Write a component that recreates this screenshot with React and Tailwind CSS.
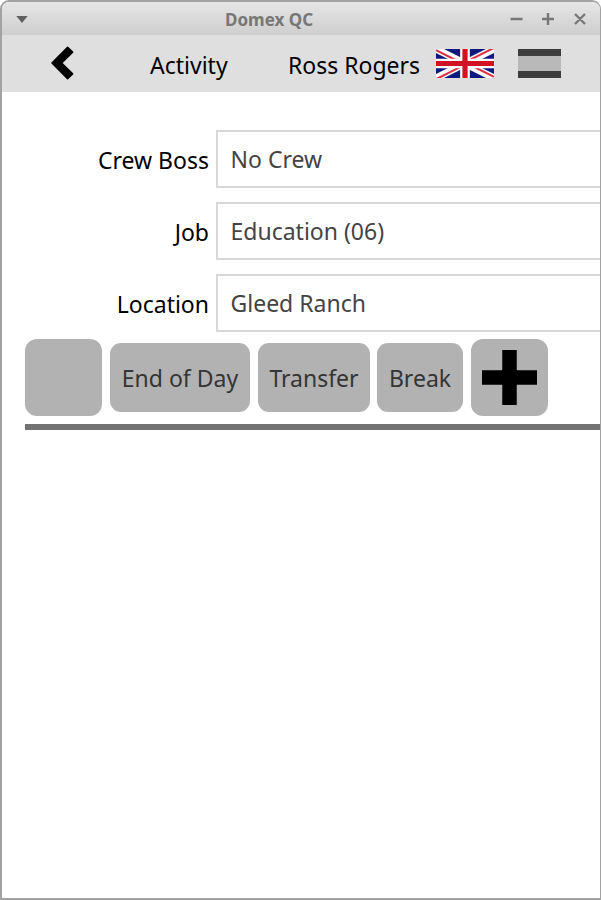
const fields = [
  { label: "Crew Boss", value: "No Crew" },
  { label: "Job", value: "Education (06)" },
  { label: "Location", value: "Gleed Ranch" },
];

const TitleBar = () => (
  <div className="flex h-[33px] shrink-0 items-center bg-gradient-to-b from-[#e6e6e6] to-[#cecece] pl-[14px] pr-[14px] text-[#777777]">
    <svg className="mt-px h-[7px] w-[12px]" viewBox="0 0 12 7">
      <path d="M0.3 0h11.4L6 7z" fill="#606060" />
    </svg>
    <h1 className="ml-[197px] w-[91px] whitespace-nowrap pt-[2px] text-[17px] font-bold leading-none">
      Domex QC
    </h1>
    <svg
      className="ml-auto h-[14px] w-[76px]"
      viewBox="0 0 76 14"
      fill="none"
      stroke="currentColor"
      strokeWidth="2.4"
    >
      <path d="M0.5 7h12M32 7h12M38 1v12M65 2l10 10M75 2l-10 10" />
    </svg>
  </div>
);

const UnionJack = () => (
  <svg className="h-[29px] w-[58px]" viewBox="0 0 60 30">
    <path d="M0 0h60v30H0z" fill="#0c1a80" />
    <path d="M0 0l60 30M60 0L0 30" stroke="#fff" strokeWidth="7.4" />
    <path
      d="M0 1.2l28 14M60 28.8L32 14.8M60 -1.2L32 12.8M0 31.2l28-14"
      stroke="#dc3045"
      strokeWidth="2.2"
    />
    <path d="M30 0v30M0 15h60" stroke="#fff" strokeWidth="10" />
    <path d="M30 0v30M0 15h60" stroke="#d01225" strokeWidth="5.4" />
  </svg>
);

const Header = () => (
  <header className="flex h-[57px] shrink-0 items-center bg-[#dfdfdf] pl-[47px] text-[23px] text-black">
    <svg className="h-[38px] w-[26px] -translate-y-px" viewBox="0 0 26 38" fill="none">
      <path
        d="M20.3 5.5L6.7 19l13.6 13.5"
        stroke="#000"
        strokeWidth="5.5"
        strokeLinejoin="miter"
      />
      <path
        d="M18.6 3.4L3 19l15.6 15.6 5-4.8L12.6 19l11-10.8z"
        fill="#000"
        stroke="#000"
        strokeWidth="1.6"
        strokeLinejoin="round"
      />
    </svg>
    <span className="ml-[75px] w-[138px] whitespace-nowrap pt-[3px]">Activity</span>
    <span className="w-[148px] whitespace-nowrap pt-[3px]">Ross Rogers</span>
    <UnionJack />
    <div className="ml-6 h-[29px] w-[43px] border-y-[7px] border-[#3c3c3c] bg-[#b9b9b9]" />
  </header>
);

const Field = ({ label, value }) => (
  <div className="flex h-[58px] items-center">
    <label className="w-[207px] pt-[3px] text-right text-black">{label}</label>
    <div className="ml-[7px] flex h-full flex-1 items-center border-2 border-r-0 border-[#d8d8d8] pl-[12.5px] pt-px text-[#444444]">
      {value}
    </div>
  </div>
);

const App = () => (
  <div className="flex h-[900px] w-[601px] flex-col overflow-hidden rounded-t-[9px] border-2 border-r border-[#a2a2a2] bg-white font-['Noto_Sans','Open_Sans',sans-serif]">
    <TitleBar />
    <Header />
    <main className="flex flex-col pt-[38px] text-[23px]">
      <div className="flex flex-col gap-[14px]">
        {fields.map((field) => (
          <Field key={field.label} {...field} />
        ))}
      </div>

      <div className="ml-[23px] mt-[7px] flex items-center gap-2 text-[#353535]">
        <button aria-label="Blank" className="h-[77px] w-[77px] rounded-[12px] bg-[#b2b2b2]" />
        <button className="h-[69px] w-[140px] whitespace-nowrap rounded-[11px] bg-[#b2b2b2] pt-[2px]">
          End of Day
        </button>
        <button className="h-[69px] w-[112px] rounded-[11px] bg-[#b2b2b2] pt-[2px]">Transfer</button>
        <button className="-ml-px h-[69px] w-[86px] rounded-[11px] bg-[#b2b2b2] pt-[2px]">Break</button>
        <button
          aria-label="Add"
          className="flex h-[77px] w-[77px] items-center justify-center rounded-[12px] bg-[#b2b2b2]"
        >
          <svg className="h-[55px] w-[55px]" viewBox="0 0 55 55">
            <path d="M27.5 0v55M0 27.5h55" stroke="#000" strokeWidth="14.5" />
          </svg>
        </button>
      </div>
      <div className="ml-[23px] mt-2 h-[6px] bg-[#737373]" />
    </main>
  </div>
);

export default App;
